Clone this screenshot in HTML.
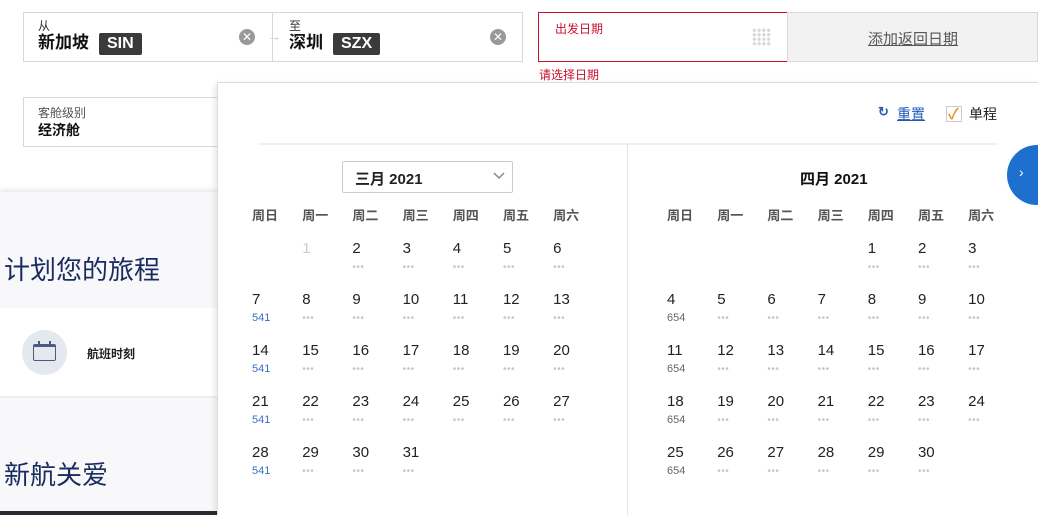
<!DOCTYPE html>
<html style="width:1038px;height:515px;overflow:hidden"><head><meta charset="utf-8"><style>
*{margin:0;padding:0;box-sizing:border-box}
body{width:1038px;height:515px;overflow:hidden;position:relative;background:#fff;font-family:"Liberation Sans","Noto Sans CJK SC",sans-serif;color:#222}
.abs{position:absolute}
.box{position:absolute;border:1px solid #d8d8d8;background:#fff}
.lbl{position:absolute;font-size:12px;color:#555}
.val{position:absolute;font-size:17px;font-weight:bold;color:#111}
.code{display:inline-block;background:#3a3a3a;color:#fff;font-size:16px;font-weight:bold;padding:2px 8px;margin-left:10px;vertical-align:middle;border-radius:2px}
.clr{position:absolute;width:16px;height:16px;border-radius:50%;background:#999;color:#fff;font-size:12px;line-height:16px;text-align:center}
.grid{position:absolute;display:grid;grid-template-columns:repeat(7,50.2px);grid-auto-rows:51px}
.c{font-size:15px;color:#222;position:relative}
.c s{text-decoration:none;position:absolute;left:0;top:21px;font-size:11px;color:#3a6fc4}
.c i{font-style:normal;position:absolute;left:0;top:22px;font-size:10px;color:#c8c8c8;letter-spacing:0.5px}
.wd{position:absolute;display:grid;grid-template-columns:repeat(7,50.2px);font-size:13px;font-weight:bold;color:#555}
</style></head><body>
<div class="box" style="left:23px;top:12px;width:250px;height:50px"></div>
<div class="box" style="left:272px;top:12px;width:251px;height:50px"></div>
<div class="lbl" style="left:38px;top:17px;color:#333">从</div>
<div class="val" style="left:38px;top:28px">新加坡<span class="code">SIN</span></div>
<div class="clr" style="left:239px;top:29px">✕</div>
<div class="abs" style="left:267px;top:28px;color:#ccc;font-size:14px">→</div>
<div class="lbl" style="left:289px;top:17px;color:#333">至</div>
<div class="val" style="left:289px;top:28px">深圳<span class="code">SZX</span></div>
<div class="clr" style="left:490px;top:29px">✕</div>
<div class="box" style="left:538px;top:12px;width:250px;height:50px;border-color:#c8102e"></div>
<div class="abs" style="left:555px;top:20px;font-size:12px;color:#c8102e">出发日期</div>
<div class="abs" style="left:752px;top:28px;width:19px;height:18px;background:radial-gradient(circle,#d8d8d8 1.6px,transparent 1.8px) 0 0/4.75px 4.5px"></div>
<div class="box" style="left:787px;top:12px;width:251px;height:50px;background:#f2f2f2"></div>
<div class="abs" style="left:868px;top:28px;font-size:15px;color:#555;text-decoration:underline">添加返回日期</div>
<div class="abs" style="left:539px;top:66px;font-size:12px;color:#c8102e">请选择日期</div>
<div class="box" style="left:23px;top:97px;width:200px;height:50px"></div>
<div class="lbl" style="left:38px;top:104px">客舱级别</div>
<div class="abs" style="left:38px;top:120px;font-size:14px;font-weight:bold;color:#111">经济舱</div>
<div class="abs" style="left:0;top:192px;width:218px;height:323px;background:#f8f8fa;box-shadow:0 -3px 4px rgba(0,0,0,.08)"></div>
<div class="abs" style="left:4px;top:250px;font-size:26px;color:#1a2b5f">计划您的旅程</div>
<div class="abs" style="left:0;top:308px;width:218px;height:90px;background:#fff;border-bottom:2px solid #eee"></div>
<div class="abs" style="left:22px;top:330px;width:45px;height:45px;border-radius:50%;background:#e4e8ef"></div>
<div class="abs" style="left:33px;top:344px;width:23px;height:17px;border:1.5px solid #4a5a82;border-radius:2px;border-top-width:3px"></div>
<div class="abs" style="left:38px;top:341px;width:2px;height:5px;background:#4a5a82"></div>
<div class="abs" style="left:49px;top:341px;width:2px;height:5px;background:#4a5a82"></div>
<div class="abs" style="left:87px;top:345px;font-size:12px;font-weight:bold;color:#222">航班时刻</div>
<div class="abs" style="left:4px;top:455px;font-size:26px;color:#1a2b5f">新航关爱</div>
<div class="abs" style="left:0;top:511px;width:218px;height:4px;background:#2a2a33"></div>
<div class="abs" style="left:217px;top:82px;width:821px;height:433px;background:#fff;border:1px solid #ddd;border-right:none;border-bottom:none;box-shadow:-2px 2px 6px rgba(0,0,0,.1)"></div>
<div class="abs" style="left:878px;top:104px;font-size:13px;color:#2a5db0;font-weight:bold">↻</div>
<div class="abs" style="left:897px;top:104px;font-size:14px;color:#1e5bb8;text-decoration:underline">重置</div>
<div class="abs" style="left:946px;top:106px;width:16px;height:16px;border:1px solid #ccc;background:#fff"></div>
<div class="abs" style="left:948px;top:103px;font-size:15px;color:#e8952a;font-weight:bold">✓</div>
<div class="abs" style="left:969px;top:104px;font-size:14px;color:#222">单程</div>
<div class="abs" style="left:258px;top:143px;width:740px;height:2px;background:#f0f0f0"></div>
<div class="abs" style="left:627px;top:144px;width:1px;height:371px;background:#e6e6e6"></div>
<div class="abs" style="left:342px;top:161px;width:171px;height:32px;border:1px solid #ccc;border-radius:2px"></div>
<div class="abs" style="left:355px;top:168px;font-size:15px;font-weight:bold;color:#222">三月 2021</div>
<svg class="abs" style="left:493px;top:172px" width="12" height="8"><path d="M1 1 L6 6 L11 1" fill="none" stroke="#888" stroke-width="1.5"/></svg>
<div class="abs" style="left:800px;top:168px;font-size:15px;font-weight:bold;color:#111">四月 2021</div>
<div class="abs" style="left:1007px;top:145px;width:60px;height:60px;border-radius:50%;background:#1f6fcf"></div>
<div class="abs" style="left:1019px;top:164px;color:#fff;font-size:14px">›</div>
<div class="wd" style="left:252px;top:205px"><span>周日</span><span>周一</span><span>周二</span><span>周三</span><span>周四</span><span>周五</span><span>周六</span></div>
<div class="wd" style="left:667px;top:205px"><span>周日</span><span>周一</span><span>周二</span><span>周三</span><span>周四</span><span>周五</span><span>周六</span></div>
<div class="grid" style="left:252px;top:240px">
<div></div><div class="c" style="color:#ccc">1</div><div class="c">2<i>•••</i></div><div class="c">3<i>•••</i></div><div class="c">4<i>•••</i></div><div class="c">5<i>•••</i></div><div class="c">6<i>•••</i></div>
<div class="c">7<s>541</s></div><div class="c">8<i>•••</i></div><div class="c">9<i>•••</i></div><div class="c">10<i>•••</i></div><div class="c">11<i>•••</i></div><div class="c">12<i>•••</i></div><div class="c">13<i>•••</i></div>
<div class="c">14<s>541</s></div><div class="c">15<i>•••</i></div><div class="c">16<i>•••</i></div><div class="c">17<i>•••</i></div><div class="c">18<i>•••</i></div><div class="c">19<i>•••</i></div><div class="c">20<i>•••</i></div>
<div class="c">21<s>541</s></div><div class="c">22<i>•••</i></div><div class="c">23<i>•••</i></div><div class="c">24<i>•••</i></div><div class="c">25<i>•••</i></div><div class="c">26<i>•••</i></div><div class="c">27<i>•••</i></div>
<div class="c">28<s>541</s></div><div class="c">29<i>•••</i></div><div class="c">30<i>•••</i></div><div class="c">31<i>•••</i></div>
</div>
<div class="grid" style="left:667px;top:240px">
<div></div><div></div><div></div><div></div><div class="c">1<i>•••</i></div><div class="c">2<i>•••</i></div><div class="c">3<i>•••</i></div>
<div class="c">4<s style="color:#666">654</s></div><div class="c">5<i>•••</i></div><div class="c">6<i>•••</i></div><div class="c">7<i>•••</i></div><div class="c">8<i>•••</i></div><div class="c">9<i>•••</i></div><div class="c">10<i>•••</i></div>
<div class="c">11<s style="color:#666">654</s></div><div class="c">12<i>•••</i></div><div class="c">13<i>•••</i></div><div class="c">14<i>•••</i></div><div class="c">15<i>•••</i></div><div class="c">16<i>•••</i></div><div class="c">17<i>•••</i></div>
<div class="c">18<s style="color:#666">654</s></div><div class="c">19<i>•••</i></div><div class="c">20<i>•••</i></div><div class="c">21<i>•••</i></div><div class="c">22<i>•••</i></div><div class="c">23<i>•••</i></div><div class="c">24<i>•••</i></div>
<div class="c">25<s style="color:#666">654</s></div><div class="c">26<i>•••</i></div><div class="c">27<i>•••</i></div><div class="c">28<i>•••</i></div><div class="c">29<i>•••</i></div><div class="c">30<i>•••</i></div>
</div>
</body></html>
